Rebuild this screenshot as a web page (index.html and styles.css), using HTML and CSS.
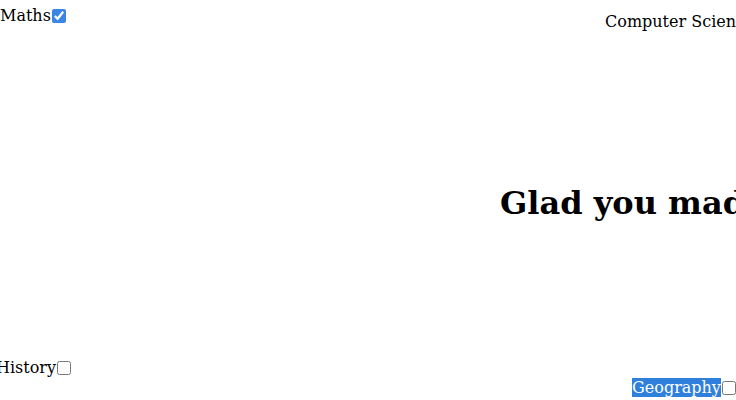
FILE: index.html
```html
<!DOCTYPE html>
<html>
<head>
<meta charset="utf-8">
<link rel="stylesheet" href="styles.css">
</head>
<body>
<div class="stage">
  <div class="row top">
    <label class="subject">Maths<input type="checkbox" checked></label>
    <span class="subject cs">Computer Science</span>
  </div>
  <h1 class="title">Glad you made it</h1>
  <div class="row history-row">
    <label class="subject">History<input type="checkbox"></label>
  </div>
  <div class="row geo-row">
    <label class="subject"><span class="selected">Geography</span><input type="checkbox"></label>
  </div>
</div>
</body>
</html>
```
FILE: styles.css
```css
html, body {
  margin: 0;
  padding: 0;
  background: #fff;
}
body {
  font-family: "DejaVu Serif", serif;
  font-size: 16px;
  color: #000;
  overflow: hidden;
}
.stage {
  width: 736px;
  height: 400px;
  overflow: hidden;
}
.row {
  display: grid;
  white-space: nowrap;
}
.top {
  grid-template-columns: 605px 1fr;
  align-items: start;
  padding-top: 6px;
}
.subject {
  white-space: nowrap;
}
.subject input {
  width: 14px;
  height: 14px;
  margin: 3px 0 3px 1px;
  vertical-align: -2px;
  accent-color: #3a86e6;
}
.cs {
  padding-top: 6px;
}
.title {
  margin: 0;
  padding: 153px 0 0 500px;
  font-size: 32px;
  font-weight: bold;
  white-space: nowrap;
  line-height: 1.2;
}
.history-row {
  margin-top: 136px;
  margin-left: -4px;
}
.geo-row {
  grid-template-columns: 632px 1fr;
  margin-top: 0;
}
.geo-row .subject {
  grid-column: 2;
}
.selected {
  background: #2f7fdd;
  color: #fff;
}
```
